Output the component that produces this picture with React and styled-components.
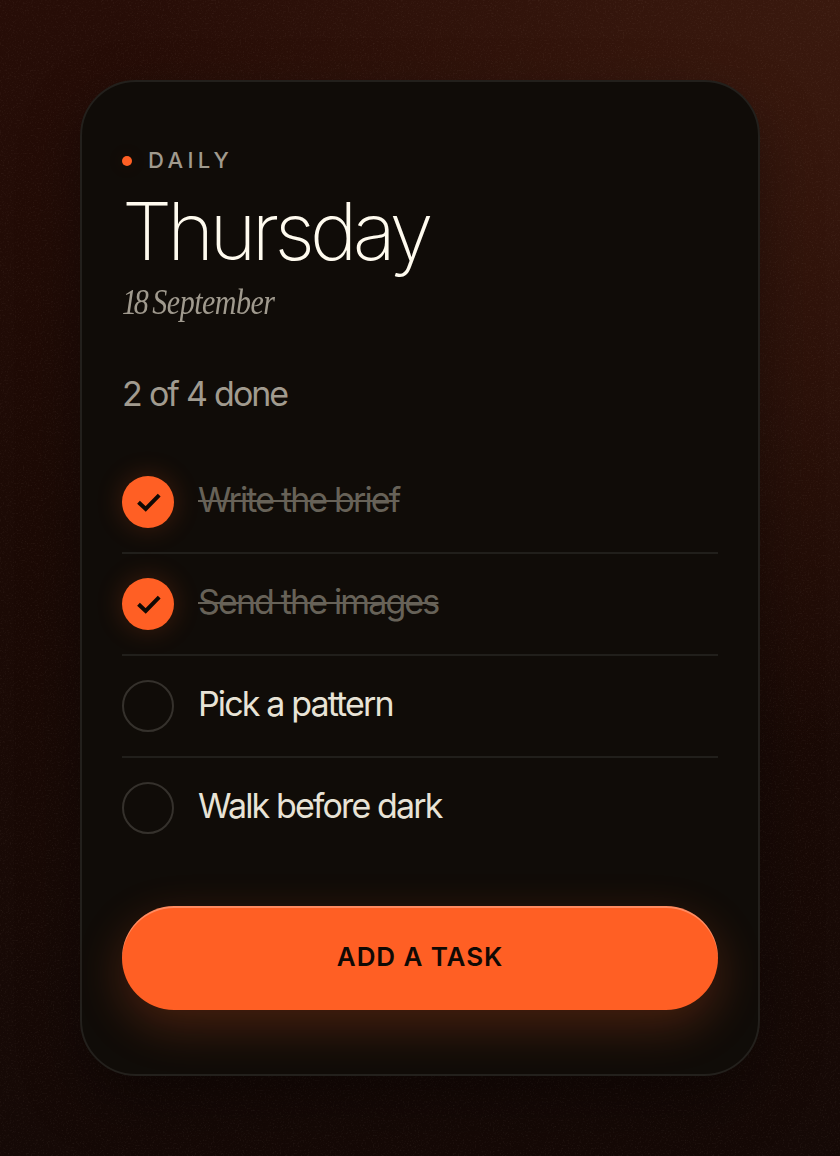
import React from 'react';
import styled, { createGlobalStyle, css } from 'styled-components';

const GlobalStyle = createGlobalStyle`
  *, *::before, *::after { box-sizing: border-box; }
  body {
    margin: 0;
    background: #140806;
    font-family: Inter, "Liberation Sans", sans-serif;
    -webkit-font-smoothing: antialiased;
  }
`;

const Page = styled.main`
  position: relative;
  min-height: 1156px;
  padding: 80px;
  overflow: hidden;
  background:
    radial-gradient(120% 90% at 100% 0%, #3a190e 0%, rgba(58, 25, 14, 0) 72%),
    linear-gradient(180deg, #270d07 0%, #1c0a05 45%, #150906 100%);
`;

const Grain = styled.svg`
  position: absolute;
  inset: 0;
  width: 100%;
  height: 100%;
  opacity: 0.06;
`;

const Card = styled.section`
  position: relative;
  display: flex;
  flex-direction: column;
  height: 996px;
  padding: 65px 40px 64px;
  border: 2px solid #23201c;
  border-radius: 56px;
  background: #100c08;
  box-shadow: 0 24px 60px rgba(0, 0, 0, 0.35);
`;

const Eyebrow = styled.div`
  display: flex;
  align-items: center;
  gap: 16px;
  height: 26px;
  color: #a09a8e;
  font-size: 22px;
  font-weight: 500;
  line-height: 24px;
  letter-spacing: 0.2em;
`;

const Dot = styled.span`
  position: relative;
  top: 1px;
  width: 10px;
  height: 10px;
  border-radius: 50%;
  background: #ff5f24;
  box-shadow: 0 0 20px rgba(255, 95, 36, 0.12);
`;

const Day = styled.h1`
  margin: 18px 0 0;
  color: #fffbef;
  font-size: 80px;
  font-weight: 200;
  line-height: 80px;
  letter-spacing: -0.059em;
`;

const DateLine = styled.p`
  width: max-content;
  margin: 11px 0 0;
  color: #a09a8e;
  font-family: "Liberation Serif", serif;
  font-size: 36px;
  font-style: italic;
  line-height: 40px;
  letter-spacing: -0.018em;
  transform: scaleX(0.835);
  transform-origin: left;
`;

const DateNumber = styled.span`
  letter-spacing: -4px;
`;

const Progress = styled.p`
  margin: 52px 0 0;
  color: #a19b8f;
  font-size: 34px;
  font-weight: 400;
  line-height: 40px;
  letter-spacing: -0.06em;
  word-spacing: 0.02em;
`;

const List = styled.ul`
  margin: 38px 0 48px;
  padding: 0;
  list-style: none;
`;

const Task = styled.li`
  display: flex;
  align-items: center;
  gap: 24px;
  padding: 24px 0;

  & + & {
    border-top: 2px solid #211f1b;
  }
`;

const Check = styled.span`
  display: grid;
  place-items: center;
  flex: none;
  width: 52px;
  height: 52px;
  border-radius: 50%;
  ${({ $done }) =>
    $done
      ? css`
          background: #ff5f24;
          box-shadow: 0 0 28px rgba(255, 95, 36, 0.2);
        `
      : css`
          border: 2px solid #35312c;
        `}
`;

const Label = styled.span`
  padding-bottom: 5px;
  color: ${({ $done }) => ($done ? '#676258' : '#e8e3d6')};
  font-size: 34px;
  font-weight: 400;
  line-height: 40px;
  letter-spacing: -0.055em;
  text-decoration: ${({ $done }) => ($done ? 'line-through' : 'none')};
  text-decoration-thickness: 2px;
`;

const AddButton = styled.button`
  height: 104px;
  padding: 0 0 3px;
  border: 0;
  border-radius: 52px;
  background: #ff5f24;
  box-shadow:
    inset 0 2px 0 rgba(255, 255, 255, 0.28),
    0 16px 48px rgba(255, 95, 36, 0.24);
  color: #100904;
  font: 600 26px/32px Inter, "Liberation Sans", sans-serif;
  letter-spacing: 0.035em;
`;

const tasks = [
  { title: 'Write the brief', done: true },
  { title: 'Send the images', done: true },
  { title: 'Pick a pattern', done: false },
  { title: 'Walk before dark', done: false },
];

function Tick() {
  return (
    <svg width="26" height="20" viewBox="0 0 26 20" fill="none" stroke="#100904" strokeWidth="4">
      <path d="M3.5 10.2 L10.7 16.9 L24.2 3.2" />
    </svg>
  );
}

export default function App() {
  return (
    <>
      <GlobalStyle />
      <Page>
        <Grain aria-hidden="true">
          <filter id="grain" x="0" y="0" width="100%" height="100%">
            <feTurbulence type="fractalNoise" baseFrequency="0.6" numOctaves="2" />
            <feColorMatrix values="0 0 0 0 0.8  0 0 0 0 0.65  0 0 0 0 0.55  3 0 0 0 -1.6" />
          </filter>
          <rect width="100%" height="100%" filter="url(#grain)" />
        </Grain>
        <Card>
          <Eyebrow>
            <Dot />
            DAILY
          </Eyebrow>
          <Day>Thursday</Day>
          <DateLine>
            <DateNumber>18</DateNumber> September
          </DateLine>
          <Progress>2 of 4 done</Progress>
          <List>
            {tasks.map(({ title, done }) => (
              <Task key={title}>
                <Check $done={done}>{done && <Tick />}</Check>
                <Label $done={done}>{title}</Label>
              </Task>
            ))}
          </List>
          <AddButton type="button">ADD A TASK</AddButton>
        </Card>
      </Page>
    </>
  );
}
